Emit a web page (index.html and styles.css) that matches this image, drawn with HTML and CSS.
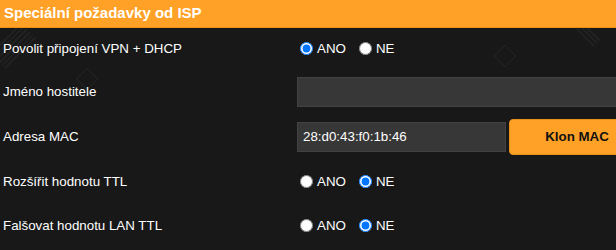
FILE: index.html
```html
<!DOCTYPE html>
<html lang="cs">
<head>
<meta charset="utf-8">
<title>Speciální požadavky od ISP</title>
<link rel="stylesheet" href="styles.css">
</head>
<body>
<div class="panel">
  <div class="deco stripes stripes-left"></div>
  <div class="deco stripes stripes-right"></div>
  <div class="deco diamond diamond-a"></div>
  <div class="deco diamond diamond-b"></div>
  <div class="header">Speciální požadavky od ISP</div>
  <div class="rows">
    <div class="row row-1">
      <div class="label">Povolit připojení VPN + DHCP</div>
      <div class="value">
        <label class="opt"><input type="radio" name="vpn" checked>ANO</label>
        <label class="opt"><input type="radio" name="vpn">NE</label>
      </div>
    </div>
    <div class="row row-2">
      <div class="label">Jméno hostitele</div>
      <div class="value"><input class="text wide" type="text" value=""></div>
    </div>
    <div class="row row-3">
      <div class="label">Adresa MAC</div>
      <div class="value">
        <input class="text mac" type="text" value="28:d0:43:f0:1b:46">
        <button class="btn" type="button">Klon MAC</button>
      </div>
    </div>
    <div class="row row-4">
      <div class="label">Rozšířit hodnotu TTL</div>
      <div class="value">
        <label class="opt"><input type="radio" name="ttl">ANO</label>
        <label class="opt"><input type="radio" name="ttl" checked>NE</label>
      </div>
    </div>
    <div class="row row-5">
      <div class="label">Falšovat hodnotu LAN TTL</div>
      <div class="value">
        <label class="opt"><input type="radio" name="lanttl">ANO</label>
        <label class="opt"><input type="radio" name="lanttl" checked>NE</label>
      </div>
    </div>
  </div>
</div>
</body>
</html>
```
FILE: styles.css
```css
html, body {
  margin: 0;
  padding: 0;
  background: #181818;
  overflow: hidden;
}
body {
  font-family: "Liberation Sans", Arial, sans-serif;
  font-size: 13.33px;
  color: #ffffff;
}
.panel {
  position: relative;
  width: 616px;
  height: 250px;
  overflow: hidden;
  background: #181818;
}
.header {
  position: relative;
  z-index: 1;
  box-sizing: border-box;
  height: 28px;
  padding: 0 0 0 4px;
  background: #ffa126;
  border-bottom: 1px solid #e88f14;
  font-size: 15px;
  font-weight: bold;
  line-height: 25px;
  color: #ffffff;
}
.rows {
  position: relative;
  z-index: 1;
  display: grid;
  grid-template-columns: 297px 353px;
  grid-template-rows: 41px 45px 45px 44px 44px;
}
.row {
  display: contents;
}
.label {
  display: flex;
  align-items: center;
  padding-left: 3px;
}
.value {
  display: flex;
  align-items: center;
}
.opt {
  display: flex;
  align-items: center;
  margin-right: 10px;
}
.opt input {
  width: 13px;
  height: 13px;
  margin: 0 4px 0 3px;
}
.text {
  box-sizing: border-box;
  height: 30px;
  padding: 0 5px;
  background: #373737;
  border: 1px solid #424242;
  color: #ffffff;
  font-family: "Liberation Sans", Arial, sans-serif;
  font-size: 13.33px;
  outline: none;
}
.wide {
  width: 353px;
}
.mac {
  width: 209px;
}
.btn {
  box-sizing: border-box;
  flex: none;
  height: 36px;
  width: 136px;
  margin-left: 3px;
  background: #ffa126;
  border: 1px solid #e8901a;
  border-radius: 4px;
  color: #111111;
  font-family: "Liberation Sans", Arial, sans-serif;
  font-size: 13.33px;
  font-weight: bold;
}
.deco {
  position: absolute;
  z-index: 0;
}
.diamond {
  width: 14px;
  height: 14px;
  border: 1.5px solid #252525;
  transform: rotate(45deg);
}
.diamond-a {
  left: 79px;
  top: 71px;
}
.diamond-b {
  left: 497px;
  top: 48px;
}
.stripes {
  background: repeating-linear-gradient(90deg, #212121 0 2px, transparent 2px 4px);
  transform: rotate(45deg);
}
.stripes-left {
  left: 2px;
  top: 24px;
  width: 22px;
  height: 44px;
}
.stripes-right {
  left: 583px;
  top: 22px;
  width: 12px;
  height: 24px;
  transform: rotate(-45deg);
}
```
